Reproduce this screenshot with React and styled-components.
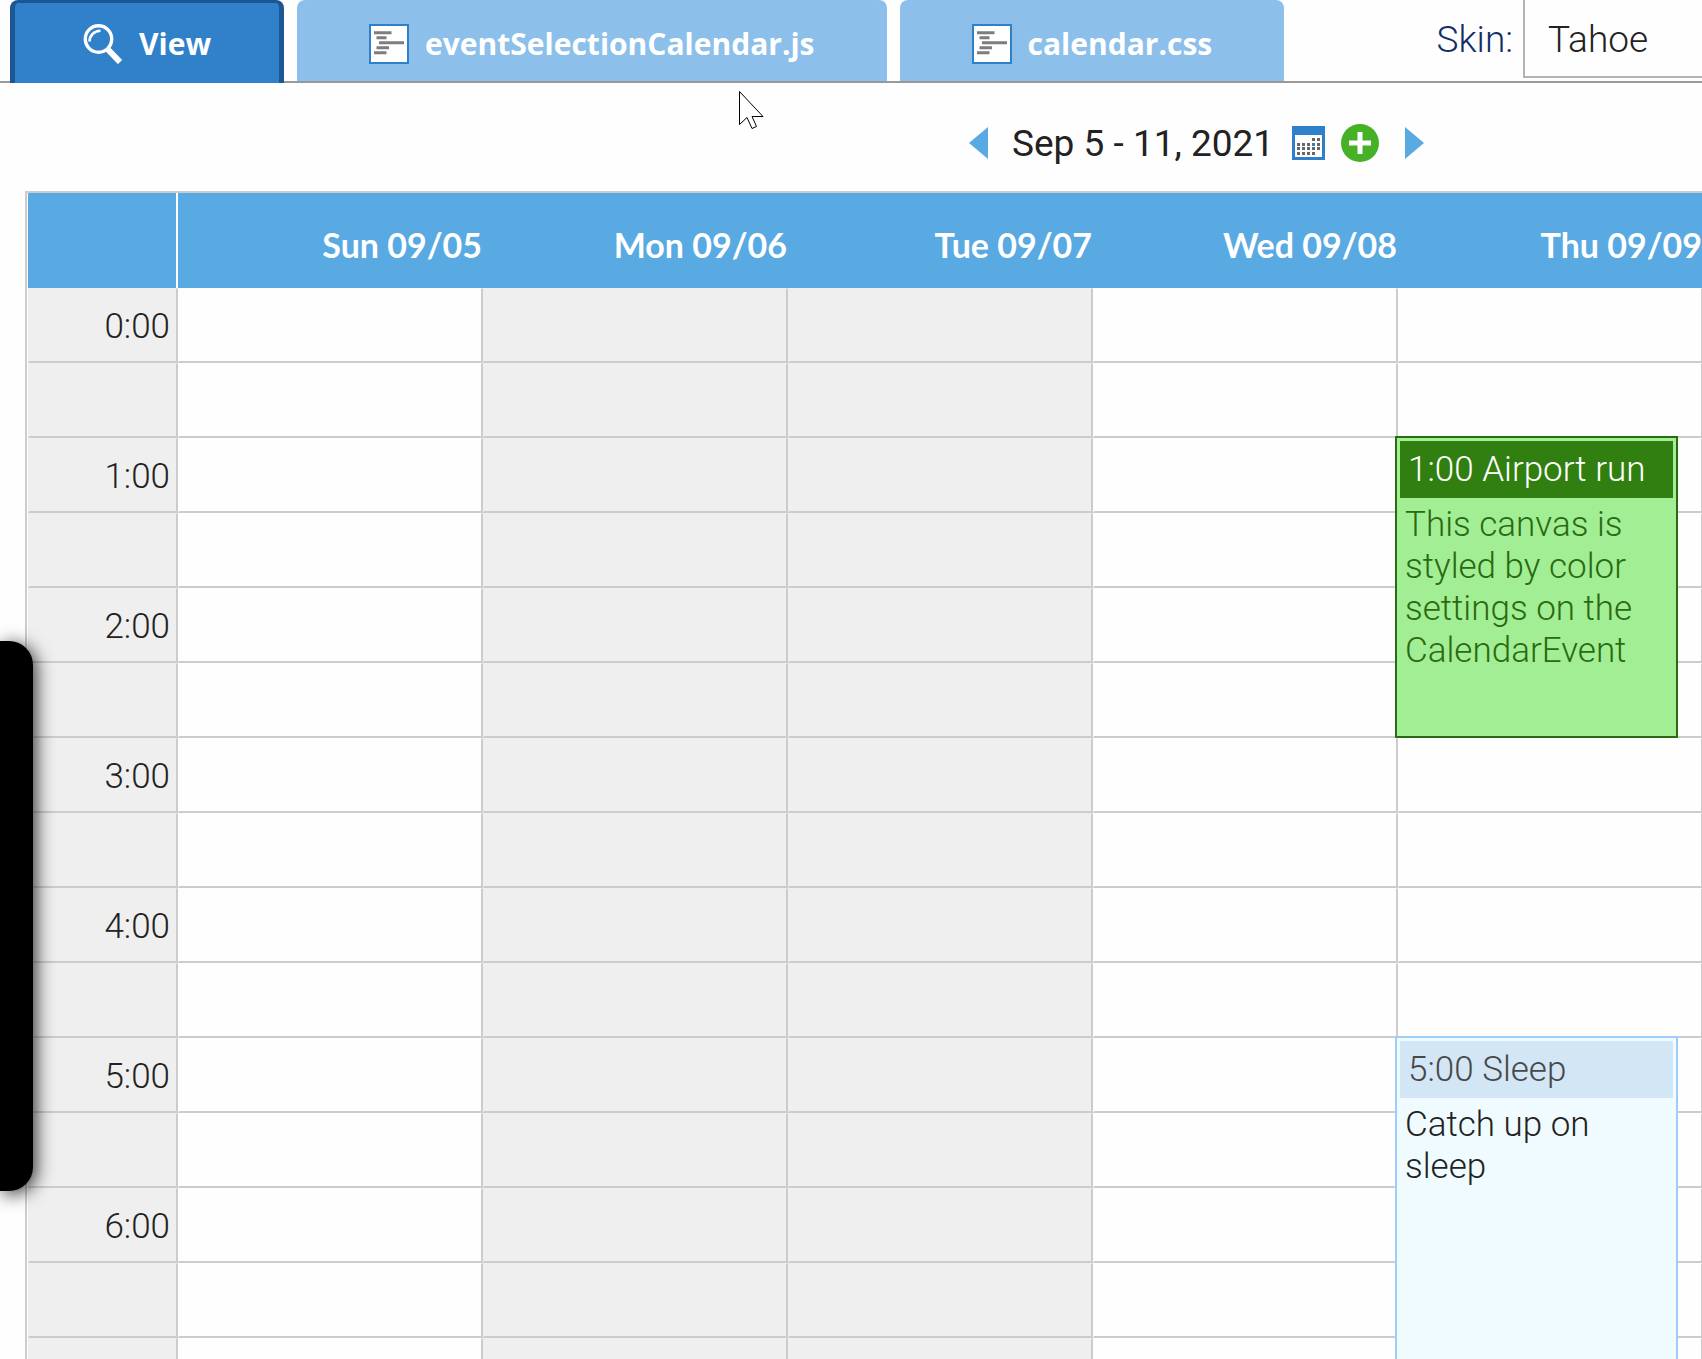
import React, { useState } from "react";
import { createGlobalStyle, styled } from "styled-components";

const days = ["Sun 09/05", "Mon 09/06", "Tue 09/07", "Wed 09/08", "Thu 09/09"];
const shadedDays = [1, 2];
const hours = [0, 1, 2, 3, 4, 5, 6];

const events = [
  {
    day: 4,
    hour: 1,
    rows: 4,
    name: "Airport run",
    description: "This canvas is styled by color settings on the CalendarEvent",
    theme: "green",
  },
  {
    day: 4,
    hour: 5,
    rows: 6,
    name: "Sleep",
    description: "Catch up on sleep",
    theme: "blue",
  },
];

const eventColors = {
  green: {
    border: "#2a6a10",
    background: "#a2ee94",
    header: "#307f10",
    headerText: "#ffffff",
    text: "#2a6a10",
  },
  blue: {
    border: "#a0ccfa",
    background: "#effbfe",
    header: "#d3e6f5",
    headerText: "#484848",
    text: "#222222",
  },
};

const SearchIcon = () => (
  <svg width="40" height="40" viewBox="0 0 40 40" fill="none" stroke="#fff">
    <circle cx="15.5" cy="15" r="13.2" strokeWidth="3.4" />
    <path d="M6.5 17.5C6.5 11.5 11 7 17.5 6.8" strokeWidth="2.6" />
    <path d="M24.5 25 37 38" strokeWidth="6" />
  </svg>
);

const SourceIcon = () => (
  <svg width="40" height="40" viewBox="0 0 40 40">
    <rect x="1" y="1" width="38" height="38" fill="#fff" stroke="#2f80cb" strokeWidth="2" />
    <path
      d="M5 8.7h17.5M7.5 13.7h10M10 18.7h25M7.5 23.7h12.5M5 28.7h12.5"
      stroke="#7d7d7d"
      strokeWidth="3"
    />
  </svg>
);

const CalendarIcon = () => (
  <svg width="33" height="34" viewBox="0 0 33 34">
    <path d="M0 0h33v34H0z" fill="#2f80cb" />
    <path d="M3 9h27v22H3z" fill="#fff" />
    <path
      d="M20 12h3v3h-3zM25 12h3v3h-3zM5 17h3v3H5zM10 17h3v3h-3zM15 17h3v3h-3zM25 17h3v3h-3zM5 21h3v3H5zM10 21h3v3h-3zM15 21h3v3h-3zM20 21h3v3h-3zM25 21h3v3h-3zM5 26h3v3H5zM10 26h3v3h-3zM15 26h3v3h-3zM20 26h3v3h-3z"
      fill="#666"
    />
    <path d="M20 17h3v3h-3z" fill="#2f80cb" />
  </svg>
);

const AddIcon = () => (
  <svg width="38" height="38" viewBox="0 0 38 38">
    <circle cx="19" cy="19" r="19" fill="#46b027" />
    <path d="M8 19h22M19 8v22" stroke="#fff" strokeWidth="5" />
  </svg>
);

const PreviousIcon = () => (
  <svg width="19" height="32" viewBox="0 0 19 32">
    <path d="M19 0v32L0 16z" fill="#59a9e2" />
  </svg>
);

const NextIcon = () => (
  <svg width="19" height="32" viewBox="0 0 19 32">
    <path d="M0 0v32l19-16z" fill="#59a9e2" />
  </svg>
);

const CalendarEvent = ({ event }) => (
  <EventCanvas $rows={event.rows} $colors={eventColors[event.theme]}>
    <EventHeader $colors={eventColors[event.theme]}>
      {event.hour}:00 {event.name}
    </EventHeader>
    <EventBody>{event.description}</EventBody>
  </EventCanvas>
);

const SlotRow = ({ label, hour }) => (
  <tr>
    <TimeCell>{label}</TimeCell>
    {days.map((day, index) => (
      <Slot key={day} $shaded={shadedDays.includes(index)}>
        {events
          .filter((e) => e.day === index && e.hour === hour)
          .map((e) => (
            <CalendarEvent key={e.name} event={e} />
          ))}
      </Slot>
    ))}
  </tr>
);

const App = () => {
  const [tab, setTab] = useState("View");
  const [skin, setSkin] = useState("Tahoe");

  return (
    <Page>
      <GlobalStyle />
      <TabBar>
        {["View", "eventSelectionCalendar.js", "calendar.css"].map((title) => (
          <Tab key={title} $selected={tab === title} onClick={() => setTab(title)}>
            {title === "View" ? <SearchIcon /> : <SourceIcon />}
            {title}
          </Tab>
        ))}
        <SkinField>
          <label htmlFor="skin">Skin:</label>
          <SkinSelect id="skin" value={skin} onChange={(e) => setSkin(e.target.value)}>
            <option>Tahoe</option>
          </SkinSelect>
        </SkinField>
      </TabBar>
      <Controls>
        <IconButton aria-label="Previous week">
          <PreviousIcon />
        </IconButton>
        <DateLabel>Sep 5 - 11, 2021</DateLabel>
        <IconButton aria-label="Choose a date">
          <CalendarIcon />
        </IconButton>
        <IconButton aria-label="Add event">
          <AddIcon />
        </IconButton>
        <NextButton aria-label="Next week">
          <NextIcon />
        </NextButton>
      </Controls>
      <WeekView>
        <WeekTable>
          <thead>
            <tr>
              <CornerCell />
              {days.map((day) => (
                <DayHeader key={day} scope="col">
                  {day}
                </DayHeader>
              ))}
            </tr>
          </thead>
          <tbody>
            {hours.map((hour) => (
              <React.Fragment key={hour}>
                <SlotRow label={`${hour}:00`} hour={hour} />
                <SlotRow />
              </React.Fragment>
            ))}
            <SlotRow />
          </tbody>
        </WeekTable>
      </WeekView>
      <Drawer />
      <Pointer width="26" height="40" viewBox="0 0 26 40">
        <path
          d="M.5.5v33l7.500-7 5 11 4.500-2-4.500-10h11z"
          fill="#fff"
          stroke="#000"
        />
      </Pointer>
    </Page>
  );
};

const GlobalStyle = createGlobalStyle`
  * {
    box-sizing: border-box;
  }
  body {
    margin: 0;
    background: #fefefe;
    font-family: Roboto, sans-serif;
    font-weight: 300;
    color: #222;
  }
`;

const Page = styled.div`
  position: relative;
  height: 100vh;
  overflow: hidden;
`;

const TabBar = styled.div`
  display: flex;
  gap: 13px;
  height: 83px;
  padding-left: 10px;
  border-bottom: 2px solid #999;
`;

const Tab = styled.button`
  display: flex;
  align-items: center;
  gap: 16px;
  padding: ${({ $selected }) => ($selected ? "1px 68px 0" : "6px 72px 0")};
  margin-bottom: ${({ $selected }) => ($selected ? "-2px" : "0")};
  border: solid #1b5794;
  border-width: ${({ $selected }) => ($selected ? "3px 5px 0" : "0")};
  border-radius: 8px 8px 0 0;
  background: ${({ $selected }) => ($selected ? "#3080ca" : "#8cc0ea")};
  color: #fff;
  font-family: "Open Sans", sans-serif;
  font-size: 30px;
  font-weight: 700;
  white-space: nowrap;
  cursor: pointer;
`;

const SkinField = styled.div`
  display: flex;
  margin-left: auto;
  font-size: 37px;
  line-height: 80px;
  label {
    margin-right: 10px;
    color: #0f2f66;
  }
`;

const SkinSelect = styled.select`
  width: 179px;
  height: 78px;
  padding: 0 0 0 23px;
  appearance: none;
  border: solid #b4b4b4;
  border-width: 0 0 2px 2px;
  border-radius: 0;
  background: transparent;
  color: #222;
  font: inherit;
`;

const Controls = styled.div`
  display: flex;
  align-items: center;
  gap: 16px;
  height: 108px;
  padding: 12px 0 0 969px;
`;

const IconButton = styled.button`
  display: flex;
  padding: 0;
  border: none;
  background: none;
  cursor: pointer;
`;

const NextButton = styled(IconButton)`
  margin-left: 10px;
`;

const DateLabel = styled.div`
  margin: 0 2px 0 8px;
  font-size: 37px;
  font-weight: 400;
  white-space: nowrap;
`;

const WeekView = styled.div`
  margin-left: 25px;
  padding-left: 1px;
  border: solid #ccc;
  border-width: 2px 0 0 2px;
`;

const WeekTable = styled.table`
  width: 100%;
  min-width: 1675px;
  table-layout: fixed;
  border-collapse: separate;
  border-spacing: 0;
`;

const CornerCell = styled.td`
  width: 150px;
  height: 95px;
  padding: 0;
  border-right: 2px solid #fff;
  background: #59a9e2;
`;

const DayHeader = styled.th`
  padding: 8px 1px 0 0;
  background: #59a9e2;
  color: #fff;
  font-family: Lato, sans-serif;
  font-size: 34px;
  font-weight: 700;
  text-align: right;
`;

const Cell = styled.td`
  height: 75px;
  padding: 0;
  border-style: solid;
  border-width: 1px 2px 2px 1px;
`;

const TimeCell = styled(Cell)`
  padding: 2px 6px 0 0;
  border-color: #efefef #ccc #ccc #efefef;
  background: #efefef;
  font-size: 35px;
  text-align: right;
`;

const Slot = styled(Cell)`
  position: relative;
  border-color: #ccc;
  border-top-color: ${({ $shaded }) => ($shaded ? "#efefef" : "#fefefe")};
  border-left-color: ${({ $shaded }) => ($shaded ? "#efefef" : "#fefefe")};
  background: ${({ $shaded }) => ($shaded ? "#efefef" : "#fefefe")};
`;

/* starts on the grid lines above and to the left of its slot */
const EventCanvas = styled.div`
  position: absolute;
  z-index: 1;
  top: -3px;
  left: -4px;
  right: 23px;
  height: ${({ $rows }) => $rows * 75 + 2}px;
  padding: 3px;
  border: 2px solid ${({ $colors }) => $colors.border};
  background: ${({ $colors }) => $colors.background};
  color: ${({ $colors }) => $colors.text};
  font-size: 35px;
  line-height: 42px;
`;

const EventHeader = styled.div`
  height: 57px;
  padding: 8px 8px 0;
  background: ${({ $colors }) => $colors.header};
  color: ${({ $colors }) => $colors.headerText};
  white-space: nowrap;
`;

const EventBody = styled.div`
  padding: 6px 5px 0;
`;

const Drawer = styled.div`
  position: absolute;
  z-index: 2;
  top: 641px;
  left: 0;
  width: 33px;
  height: 550px;
  border-radius: 0 24px 24px 0;
  background: #000;
  box-shadow: 3px 3px 18px rgba(0, 0, 0, 0.8);
`;

const Pointer = styled.svg`
  position: absolute;
  top: 91px;
  left: 739px;
`;

export default App;
